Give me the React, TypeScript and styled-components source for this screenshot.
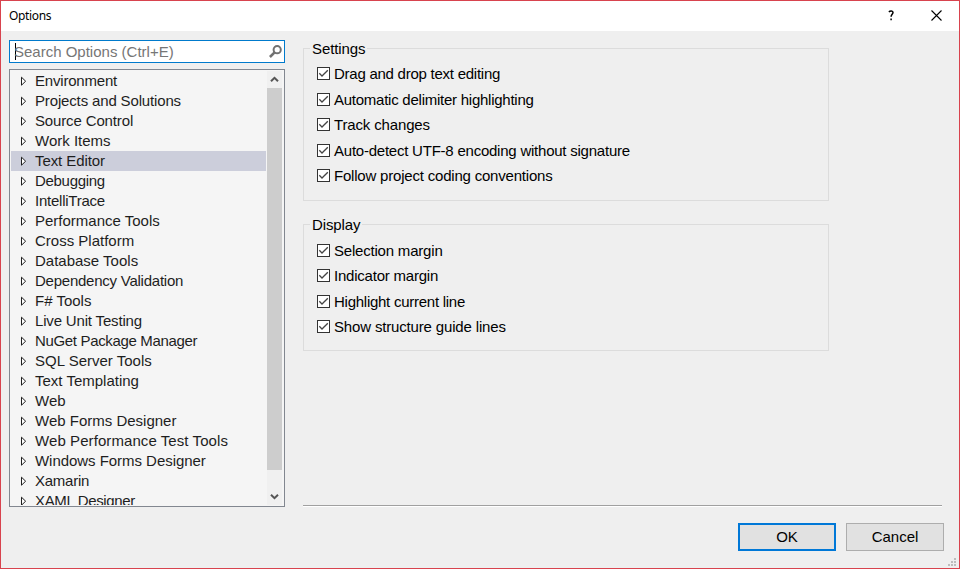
import React from "react";
import styled, { createGlobalStyle } from "styled-components";

const GlobalStyle = createGlobalStyle`
  *, *::before, *::after { box-sizing: border-box; }
  body { margin: 0; overflow: hidden; }
`;

const Dialog = styled.div`
  position: relative;
  display: flex;
  flex-direction: column;
  width: 960px;
  height: 569px;
  border: 1px solid #d8434e;
  background: #efefef;
  color: #000;
  font: 15px/20px "Liberation Sans", Arial, sans-serif;
`;

const TitleBar = styled.header`
  display: flex;
  align-items: center;
  height: 30px;
  flex: none;
  padding: 0 17px 0 8px;
  background: #fff;
  font: 12px/16px "Noto Sans", "Open Sans", sans-serif;
`;

const Title = styled.span`
  flex: 1;
  letter-spacing: -0.35px;
`;

const TitleButton = styled.button`
  display: flex;
  width: 11px;
  height: 11px;
  margin-top: -1px;
  padding: 0;
  border: 0;
  background: none;
  & + & { margin-left: 32px; }
`;

const Body = styled.div`
  display: flex;
  flex: 1;
  min-height: 0;
  padding: 9px 17px 0 8px;
`;

const Sidebar = styled.aside`
  display: flex;
  flex-direction: column;
  flex: none;
  width: 276px;
`;

const SearchBox = styled.div`
  display: flex;
  align-items: center;
  height: 23px;
  padding: 0 2px 0 5px;
  border: 1px solid #007acc;
  background: #fff;
  color: #767676;
`;

const Caret = styled.span`
  width: 1px;
  height: 17px;
  margin-right: -2px;
  background: #000;
`;

const Placeholder = styled.span`
  flex: 1;
`;

const Tree = styled.div`
  display: flex;
  height: 438px;
  margin-top: 6px;
  padding: 1px 2px 1px 1px;
  border: 1px solid #828790;
  background: #f5f5f5;
`;

const TreeList = styled.ul`
  flex: 1;
  min-width: 0;
  margin: 0 1px 0 0;
  padding: 0;
  overflow: hidden;
  list-style: none;
`;

const TreeItem = styled.li<{ $selected: boolean; $tracking: number }>`
  display: flex;
  align-items: center;
  height: 20px;
  padding-left: 10px;
  gap: 8px;
  color: #1e1e1e;
  letter-spacing: ${(p) => p.$tracking}px;
  background: ${(p) => (p.$selected ? "#cccedb" : "transparent")};
`;

const Scrollbar = styled.div`
  display: flex;
  flex-direction: column;
  width: 15px;
  background: #f0f0f0;
`;

const ScrollButton = styled.div`
  display: flex;
  justify-content: center;
  align-items: center;
  height: 17px;
`;

const Thumb = styled.div`
  height: 382px;
  background: #cdcdcd;
`;

const ScrollTrack = styled.div`
  flex: 1;
`;

const Content = styled.main`
  flex: 1;
  display: flex;
  flex-direction: column;
  margin-left: 18px;
`;

const Group = styled.section<{ $height: number; $gap: number }>`
  width: 526px;
  height: ${(p) => p.$height}px;
  margin-top: ${(p) => p.$gap}px;
  padding-left: 13px;
  border: 1px solid #dcdcdc;
`;

const GroupTitle = styled.h2<{ $space: number }>`
  width: max-content;
  height: 20px;
  margin: -11px 0 ${(p) => p.$space}px -7px;
  padding: 0 2px;
  background: #efefef;
  font: inherit;
  line-height: 22px;
  letter-spacing: -0.1px;
`;

const CheckRow = styled.label<{ $height: number }>`
  display: flex;
  align-items: flex-start;
  gap: 4px;
  height: ${(p) => p.$height}px;
`;

const CheckMark = styled.span`
  display: flex;
  width: 13px;
  height: 13px;
  margin-top: 5px;
  border: 1px solid #333;
  background: #fff;
`;

const CheckText = styled.span<{ $tracking: number }>`
  line-height: 20px;
  margin-top: 2px;
  letter-spacing: ${(p) => p.$tracking}px;
`;

const Footer = styled.footer`
  display: flex;
  flex-direction: column;
  margin-top: auto;
  height: 63px;
`;

const Separator = styled.div`
  height: 2px;
  width: 639px;
  border-top: 1px solid #a0a0a0;
  border-bottom: 1px solid #fff;
`;

const Buttons = styled.div`
  display: flex;
  justify-content: flex-end;
  gap: 10px;
  margin: 16px -2px 0 0;
`;

const Button = styled.button<{ $primary?: boolean }>`
  width: 98px;
  height: 28px;
  padding: 0;
  border: ${(p) => (p.$primary ? "2px solid #0078d7" : "1px solid #adadad")};
  background: #e1e1e1;
  color: #000;
  font: 15px/20px "Liberation Sans", Arial, sans-serif;
`;

const Grip = styled.svg`
  position: absolute;
  right: 3px;
  bottom: 2px;
`;

/* Each label is paired with its letter spacing in pixels. */
const categories: [string, number][] = [
  ["Environment", -0.2], ["Projects and Solutions", -0.15],
  ["Source Control", -0.14], ["Work Items", 0], ["Text Editor", -0.08],
  ["Debugging", -0.3], ["IntelliTrace", -0.24], ["Performance Tools", 0],
  ["Cross Platform", 0], ["Database Tools", 0],
  ["Dependency Validation", -0.24], ["F# Tools", 0],
  ["Live Unit Testing", -0.17], ["NuGet Package Manager", -0.34],
  ["SQL Server Tools", 0], ["Text Templating", 0], ["Web", 0],
  ["Web Forms Designer", 0], ["Web Performance Test Tools", 0.08],
  ["Windows Forms Designer", -0.04], ["Xamarin", -0.25], ["XAML Designer", -0.35],
];

const groups: {
  title: string; height: number; gap: number; space: number;
  pitches: number[]; options: [string, number][];
}[] = [
  {
    title: "Settings", height: 153, gap: 8, space: 4, pitches: [26, 25],
    options: [
      ["Drag and drop text editing", -0.25],
      ["Automatic delimiter highlighting", -0.25],
      ["Track changes", -0.15],
      ["Auto-detect UTF-8 encoding without signature", -0.23],
      ["Follow project coding conventions", -0.2],
    ],
  },
  {
    title: "Display", height: 127, gap: 23, space: 5, pitches: [25, 26],
    options: [
      ["Selection margin", -0.2],
      ["Indicator margin", -0.22],
      ["Highlight current line", -0.26],
      ["Show structure guide lines", -0.16],
    ],
  },
];

const Chevron = ({ down = false }: { down?: boolean }) => (
  <svg width="9" height="7" viewBox="0 0 9 7" fill="none" stroke="#555" strokeWidth="2">
    <path d={down ? "M1 1.7 4.5 5.2 8 1.7" : "M1 5.3 4.5 1.8 8 5.3"} />
  </svg>
);

const Expander = () => (
  <svg width="6" height="10" viewBox="0 0 6 10" fill="#fff" stroke="#1e1e1e">
    <path d="M.5 1.2V9.2L4.6 5.2Z" />
  </svg>
);

export default function App() {
  return (
    <>
      <GlobalStyle />
      <Dialog>
        <TitleBar>
          <Title>Options</Title>
          <TitleButton aria-label="Help">
            <svg width="11" height="11" viewBox="0 0 11 11" fill="none" stroke="#000" strokeWidth="1.5">
              <path d="M.9 1.9C2 .7 5 .5 5 2.6 5 4.3 3.1 4.5 3.1 6.8M3.1 8.5V10.2" />
            </svg>
          </TitleButton>
          <TitleButton aria-label="Close">
            <svg width="11" height="11" viewBox="0 0 11 11" stroke="#000" strokeWidth="1.1">
              <path d="M.5.5l10 10M10.5.5l-10 10" />
            </svg>
          </TitleButton>
        </TitleBar>
        <Body>
          <Sidebar>
            <SearchBox>
              <Caret />
              <Placeholder>Search Options (Ctrl+E)</Placeholder>
              <svg width="13" height="13" viewBox="0 0 13 13" fill="none" stroke="#717171" strokeWidth="2">
                <circle cx="8.2" cy="4.7" r="3.6" />
                <path d="M5.6 7.3.9 12" strokeWidth="2.6" />
              </svg>
            </SearchBox>
            <Tree>
              <TreeList>
                {categories.map(([name, tracking]) => (
                  <TreeItem key={name} $selected={name === "Text Editor"} $tracking={tracking}>
                    <Expander />
                    <span>{name}</span>
                  </TreeItem>
                ))}
              </TreeList>
              <Scrollbar>
                <ScrollButton><Chevron /></ScrollButton>
                <Thumb />
                <ScrollTrack />
                <ScrollButton><Chevron down /></ScrollButton>
              </Scrollbar>
            </Tree>
          </Sidebar>
          <Content>
            {groups.map((group) => (
              <Group key={group.title} $height={group.height} $gap={group.gap}>
                <GroupTitle $space={group.space}>{group.title}</GroupTitle>
                {group.options.map(([option, tracking], i) => (
                  <CheckRow key={option} $height={group.pitches[i % 2]}>
                    <CheckMark>
                      <svg width="11" height="11" viewBox="0 0 11 11" fill="none" stroke="#444" strokeWidth="1.3">
                        <path d="M1.3 5.3 4 8 9.8 2.2" />
                      </svg>
                    </CheckMark>
                    <CheckText $tracking={tracking}>{option}</CheckText>
                  </CheckRow>
                ))}
              </Group>
            ))}
            <Footer>
              <Separator />
              <Buttons>
                <Button $primary>OK</Button>
                <Button>Cancel</Button>
              </Buttons>
            </Footer>
          </Content>
        </Body>
        <Grip width="8" height="8" viewBox="0 0 8 8" fill="#bdbdbd">
          <path d="M6 0h2v2h-2zM3 3h2v2h-2zM6 3h2v2h-2zM0 6h2v2h-2zM3 6h2v2h-2zM6 6h2v2h-2z" />
        </Grip>
      </Dialog>
    </>
  );
}
